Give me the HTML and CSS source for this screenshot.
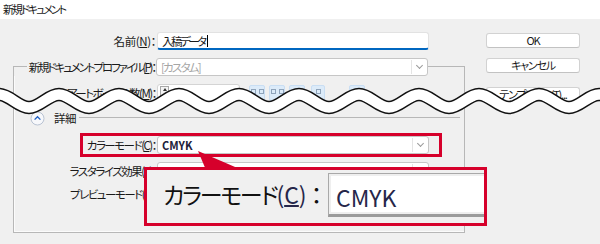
FILE: index.html
```html
<!DOCTYPE html>
<html lang="ja">
<head>
  <meta charset="UTF-8" />
  <title>新規ドキュメント</title>
  <link rel="stylesheet" href="styles.css">
</head>
<body>
  <div class="window">
    <div class="titlebar">新規ドキュメント</div>

    <div class="dialog">
      <div class="main">
        <div class="row">
          <span class="lbl name-lbl">名前(<u>N</u>)：</span>
          <div class="field focused">入稿データ<span class="caret"></span></div>
        </div>

        <div class="row legend">
          <span class="edge edge-left"></span>
          <span class="lbl lbl-auto">新規ドキュメントプロファイル(<u>P</u>)：</span>
          <div class="field select muted">[カスタム]<span class="drop"></span></div>
          <span class="edge edge-right"></span>
        </div>

        <div class="group">
          <div class="row">
            <span class="lbl">アートボードの数(<u>M</u>)：</span>
            <div class="field spinbox">
              <span class="spin"><i class="up"></i><i class="down"></i></span>1
            </div>
            <div class="tools">
              <span class="tool"><i></i><i></i></span>
              <span class="tool"><i></i><i></i></span>
              <span class="tool"><i></i></span>
              <span class="tool narrow"><i></i></span>
              <span class="tool gap"><i></i></span>
            </div>
          </div>

          <div class="details">
            <span class="toggle">
              <svg width="15" height="15" viewBox="0 0 15 15">
                <circle cx="7.5" cy="7.5" r="6.5" fill="#f7f8fb" stroke="#b9c3d3" />
                <path d="M4.6 8.6 L7.5 5.7 L10.4 8.6" fill="none" stroke="#1d5fc4" stroke-width="1.3" />
              </svg>
            </span>
            <span>詳細</span>
            <span class="rule"></span>
          </div>

          <div class="row mode-row">
            <span class="lbl">カラーモード(<u>C</u>)：</span>
            <div class="field select"><b>CMYK</b><span class="drop"></span></div>
          </div>

          <div class="row raster-row">
            <span class="lbl">ラスタライズ効果(<u>R</u>)：</span>
            <div class="field select"><span class="drop"></span></div>
          </div>

          <div class="row preview-row">
            <span class="lbl">プレビューモード(<u>E</u>)：</span>
            <div class="field select"><span class="drop"></span></div>
          </div>
        </div>
      </div>

      <div class="side">
        <div class="btn ok">OK</div>
        <div class="btn cancel">キャンセル</div>
        <div class="btn tpl">テンプレート(<u>T</u>)...</div>
      </div>
    </div>

    <!-- 注釈 -->
    <div class="highlight"></div>

    <svg class="wave" width="600" height="45" viewBox="0 80 600 45">
      <defs>
        <path id="wv" d="M -61 94.5 C -50.2 94.5 -41.8 107.5 -31 107.5 S -11.8 94.5 -1 94.5 S 18.2 107.5 29 107.5 S 48.2 94.5 59 94.5 S 78.2 107.5 89 107.5 S 108.2 94.5 119 94.5 S 138.2 107.5 149 107.5 S 168.2 94.5 179 94.5 S 198.2 107.5 209 107.5 S 228.2 94.5 239 94.5 S 258.2 107.5 269 107.5 S 288.2 94.5 299 94.5 S 318.2 107.5 329 107.5 S 348.2 94.5 359 94.5 S 378.2 107.5 389 107.5 S 408.2 94.5 419 94.5 S 438.2 107.5 449 107.5 S 468.2 94.5 479 94.5 S 498.2 107.5 509 107.5 S 528.2 94.5 539 94.5 S 558.2 107.5 569 107.5 S 588.2 94.5 599 94.5 S 618.2 107.5 629 107.5 S 648.2 94.5 659 94.5" />
      </defs>
      <use href="#wv" fill="none" stroke="#111" stroke-width="13.5" />
      <use href="#wv" fill="none" stroke="#fff" stroke-width="10.5" />
    </svg>

    <div class="callout">
      <span class="big-lbl">カラーモード<span class="key">(<u>C</u>)</span>：</span>
      <div class="big-field">CMYK</div>
    </div>

    <svg class="pointer" width="60" height="24" viewBox="190 150 60 24">
      <polygon points="198,151 206,170 242,170" fill="#d6002b" />
    </svg>
  </div>
</body>
</html>
```

FILE: styles.css
```css
body {
    margin: 0;
    background-color: #f0f0f0;
    font-family: "Noto Sans CJK JP", "Noto Sans", sans-serif;
    font-size: 11.5px;
    color: #1a1a1a;
    font-feature-settings: "palt";
}

u {
    text-underline-offset: 1px;
}

.window {
    position: relative;
    width: 600px;
    height: 244px;
    overflow: hidden;
}

.titlebar {
    height: 19px;
    line-height: 18px;
    padding-left: 3px;
    background-color: white;
    font-size: 11px;
    letter-spacing: -2px;
}

.dialog {
    display: flex;
    padding: 13px 0 0 13px;
}

.main {
    width: 452px;
}

/* rows */

.row {
    display: flex;
    align-items: center;
    height: 18px;
    letter-spacing: -1.5px;
}

.lbl {
    width: 143px;
    flex-shrink: 0;
    text-align: right;
    white-space: nowrap;
}

.name-lbl {
    letter-spacing: -0.4px;
}

.group .lbl {
    width: 142px;
}

.lbl-auto {
    width: auto;
    padding-left: 2px;
    letter-spacing: -2.1px;
}

.field {
    box-sizing: border-box;
    width: 272px;
    height: 18px;
    margin-left: 1px;
    padding-left: 4px;
    flex-shrink: 0;
    display: flex;
    align-items: center;
    background-color: white;
    border: 1px solid #d4d4d4;
    border-radius: 3px;
    letter-spacing: 0;
    white-space: nowrap;
    position: relative;
}

.focused {
    border-color: #e2e2e2;
    border-bottom: 2px solid #0067c0;
    letter-spacing: -2.5px;
}

.caret {
    width: 1px;
    height: 12px;
    margin-left: 2px;
    background-color: black;
}

.select {
    border-color: #c6c6c6;
}

.muted {
    color: #a6a6a6;
    letter-spacing: -1.8px;
}

.drop {
    position: absolute;
    top: 1px;
    right: 0;
    width: 15px;
    height: 14px;
    border-left: 1px solid #e4e4e4;
}

.drop::after {
    content: "";
    position: absolute;
    left: 5px;
    top: 3px;
    width: 4px;
    height: 4px;
    border-right: 1px solid #9a9a9a;
    border-bottom: 1px solid #9a9a9a;
    transform: rotate(45deg);
}

.mode-row b {
    font-weight: bold;
    color: #20203a;
    font-size: 11px;
}

/* group box */

.legend {
    margin-top: 8px;
}

.edge {
    align-self: flex-end;
    height: 9px;
    border-top: 1px solid #b7b7b7;
}

.edge-left {
    flex: 1;
    border-left: 1px solid #b7b7b7;
}

.edge-right {
    width: 36px;
    border-right: 1px solid #b7b7b7;
}

.group {
    border: 1px solid #b7b7b7;
    border-top: none;
    box-shadow: inset 1px -1px 0 #fbfbfb;
    padding: 8px 0 29px;
    height: 157px;
    box-sizing: border-box;
}

.spinbox {
    width: 83px;
    padding-left: 2px;
}

.spin {
    display: flex;
    flex-direction: column;
    align-items: center;
    justify-content: space-between;
    width: 7px;
    height: 12px;
    margin-right: 6px;
    border: 1px solid #a8a8a8;
    background-color: #f4f4f4;
}

.spin i {
    width: 0;
    height: 0;
    border-left: 2px solid transparent;
    border-right: 2px solid transparent;
}

.spin .up {
    border-bottom: 3px solid #333;
    margin-top: 1px;
}

.spin .down {
    border-top: 3px solid #333;
    margin-bottom: 1px;
}

.tools {
    display: flex;
    gap: 4px;
    margin-left: 9px;
}

.tool {
    width: 16px;
    height: 16px;
    box-sizing: border-box;
    display: flex;
    justify-content: center;
    gap: 3px;
    padding-top: 3px;
    border: 1px solid #c9def3;
    border-radius: 2px;
    background-color: #dcebf9;
}

.tool i {
    width: 3px;
    height: 3px;
    border: 1px solid #8fa4bb;
}

.tool.narrow {
    width: 14px;
    margin-left: 2px;
}

.tool.gap {
    margin-left: 20px;
}

.details {
    display: flex;
    align-items: center;
    height: 18px;
    margin-top: 7px;
    padding-left: 16px;
    letter-spacing: -0.5px;
}

.toggle {
    display: flex;
    width: 15px;
    height: 15px;
    margin-right: 9px;
}

.rule {
    flex: 1;
    height: 1px;
    margin: 0 4px 1px 3px;
    background-color: #b7b7b7;
}

.mode-row {
    margin-top: 9px;
}

.raster-row {
    margin-top: 8px;
}

.preview-row {
    margin-top: 5px;
}

/* buttons */

.side {
    display: flex;
    flex-direction: column;
    width: 94px;
    margin-left: 21px;
    padding-top: 1px;
}

.btn {
    box-sizing: border-box;
    height: 15px;
    line-height: 13px;
    text-align: center;
    background-color: white;
    border: 1px solid #d2d2d2;
    border-bottom-color: #c2c2c2;
    border-radius: 3px;
    font-size: 11px;
    letter-spacing: -1.2px;
}

.cancel {
    margin-top: 10px;
}

.tpl {
    margin-top: 14px;
}

/* annotations */

.highlight {
    position: absolute;
    left: 80px;
    top: 133px;
    width: 362px;
    height: 24px;
    box-sizing: border-box;
    border: 3px solid #d6002b;
}

.wave {
    position: absolute;
    left: 0;
    top: 80px;
}

.callout {
    position: absolute;
    left: 144px;
    top: 167px;
    width: 343px;
    height: 59px;
    box-sizing: border-box;
    border: 3px solid #d6002b;
    background-color: #f0f0f0;
    display: flex;
    align-items: flex-start;
    padding: 3px 0 0 16px;
    overflow: hidden;
}

.big-lbl {
    width: 165px;
    flex-shrink: 0;
    line-height: 42px;
    font-size: 23px;
    color: #111;
    white-space: nowrap;
    letter-spacing: -2.2px;
}

.key {
    color: #26264a;
    margin-right: 4px;
    letter-spacing: 0;
}

.big-field {
    flex-shrink: 0;
    box-sizing: border-box;
    width: 200px;
    height: 44px;
    padding: 4px 0 0 7px;
    line-height: 38px;
    font-size: 23px;
    color: #26264a;
    background-color: white;
    border: 1px solid #a9a9a9;
    border-bottom: 3px solid #9b9b9b;
    box-shadow: inset 0 0 0 2px #efefef;
}

.pointer {
    position: absolute;
    left: 190px;
    top: 150px;
}
```
